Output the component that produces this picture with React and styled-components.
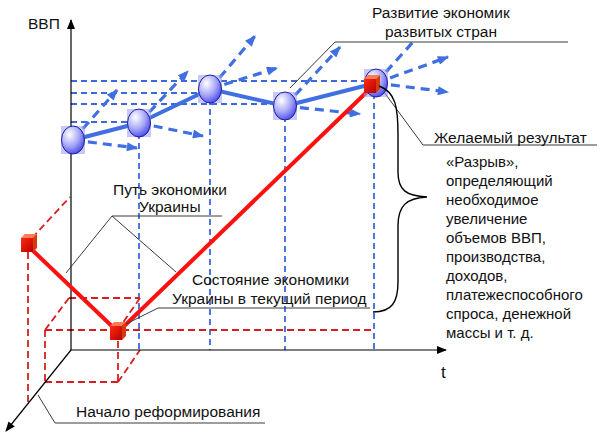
import React from 'react';
import styled, { createGlobalStyle } from 'styled-components';

const balls = [
  { x: 73, y: 140 },
  { x: 139, y: 123 },
  { x: 210, y: 89 },
  { x: 285, y: 106 },
  { x: 376, y: 83 },
];

const guidesH = [
  { y: 81, to: 372 },
  { y: 93, to: 200 },
  { y: 104, to: 282 },
  { y: 122, to: 135 },
];

const guidesV = [
  { x: 139, from: 123 },
  { x: 210, from: 89 },
  { x: 285, from: 106 },
  { x: 374, from: 83 },
];

const arrows = [
  [73, 140, 137, 148],
  [73, 140, 117, 90],
  [139, 123, 203, 136],
  [139, 123, 188, 71],
  [210, 89, 255, 36],
  [210, 89, 277, 68],
  [285, 106, 340, 47],
  [285, 106, 360, 114],
  [376, 83, 448, 57],
  [376, 83, 448, 92],
];

const boxEdges = [
  [32, 238, 70, 197],
  [28, 252, 28, 402],
  [45, 330, 374, 330],
  [45, 330, 45, 382],
  [45, 382, 118, 382],
  [118, 330, 118, 382],
  [45, 330, 69, 298],
  [69, 298, 140, 298],
  [140, 298, 120, 327],
  [118, 382, 140, 350],
];

const pointers = [
  [112, 216, 222, 216],
  [112, 216, 66, 273],
  [112, 216, 176, 272],
  [158, 308, 370, 308],
  [158, 308, 122, 326],
  [335, 42, 568, 42],
  [335, 42, 290, 88],
  [423, 145, 597, 145],
  [423, 145, 381, 88],
  [55, 423, 265, 423],
  [55, 423, 38, 395],
];

const gapLines = [
  '«Разрыв»,',
  'определяющий',
  'необходимое',
  'увеличение',
  'объемов ВВП,',
  'производства,',
  'доходов,',
  'платежеспособного',
  'спроса, денежной',
  'массы и т. д.',
];

const cubes = [
  { x: 21, y: 238 },
  { x: 110, y: 326 },
  { x: 364, y: 79 },
];

function Ball({ x, y }) {
  return (
    <g>
      <Halo x={x - 12} y={y - 14} width={24} height={28} />
      <Sphere cx={x} cy={y} rx={11.5} ry={14} />
    </g>
  );
}

function Cube({ x, y }) {
  return (
    <g>
      <CubeTop points={`${x},${y} ${x + 4},${y - 4} ${x + 16},${y - 4} ${x + 12},${y}`} />
      <CubeSide points={`${x + 12},${y} ${x + 16},${y - 4} ${x + 16},${y + 10} ${x + 12},${y + 14}`} />
      <CubeFront x={x} y={y} width={12} height={14} />
    </g>
  );
}

export default function App() {
  return (
    <Page>
      <GlobalStyle />
      <Chart viewBox="0 0 600 436" width="600" height="436">
        <defs>
          <radialGradient id="sphere" cx="35%" cy="30%" r="75%">
            <stop offset="0%" stopColor="#ffffff" />
            <stop offset="55%" stopColor="#a9a9f7" />
            <stop offset="100%" stopColor="#4a4ae8" />
          </radialGradient>
          <linearGradient id="cube" x1="0" y1="0" x2="1" y2="1">
            <stop offset="0%" stopColor="#ff2a10" />
            <stop offset="100%" stopColor="#b80000" />
          </linearGradient>
          <marker id="blueHead" viewBox="0 0 10 8" refX="9" refY="4" markerWidth="12" markerHeight="9" markerUnits="userSpaceOnUse" orient="auto">
            <path d="M0 0 L10 4 L0 8 Z" fill="#3f6fe0" />
          </marker>
          <marker id="blackHead" viewBox="0 0 10 8" refX="9" refY="4" markerWidth="12" markerHeight="8" markerUnits="userSpaceOnUse" orient="auto">
            <path d="M0 0 L10 4 L0 8 Z" fill="#000" />
          </marker>
        </defs>

        {guidesH.map((g) => (
          <Guide key={`h${g.y}`} x1={71} y1={g.y} x2={g.to} y2={g.y} />
        ))}
        {guidesV.map((g) => (
          <Guide key={`v${g.x}`} x1={g.x} y1={g.from} x2={g.x} y2={350} />
        ))}

        {boxEdges.map(([x1, y1, x2, y2], i) => (
          <RedGuide key={`r${i}`} x1={x1} y1={y1} x2={x2} y2={y2} />
        ))}

        <Axis x1={71} y1={350} x2={71} y2={20} markerEnd="url(#blackHead)" />
        <Axis x1={71} y1={350} x2={446} y2={350} markerEnd="url(#blackHead)" />
        <Axis x1={71} y1={350} x2={6} y2={431} markerEnd="url(#blackHead)" />

        {arrows.map(([x1, y1, x2, y2], i) => (
          <Forecast key={`a${i}`} x1={x1} y1={y1} x2={x2} y2={y2} markerEnd="url(#blueHead)" />
        ))}
        <Forecast x1={376} y1={83} x2={413} y2={42} />

        <Trend points={balls.map((b) => `${b.x},${b.y}`).join(' ')} />
        <Path points="27,245 118,332 372,87" />

        {pointers.map(([x1, y1, x2, y2], i) => (
          <Pointer key={`p${i}`} x1={x1} y1={y1} x2={x2} y2={y2} />
        ))}

        {balls.map((b) => (
          <Ball key={b.x} {...b} />
        ))}
        {cubes.map((c) => (
          <Cube key={c.x} {...c} />
        ))}

        <Brace d="M379 86 C 396 92, 398 108, 398 135 L 398 172 C 398 190, 406 196, 427 197 C 406 198, 398 206, 398 226 L 398 282 C 398 302, 392 312, 373 312" />

        <Label x={28} y={29} $size={15.5}>ВВП</Label>
        <Label x={441} y={378} $size={17}>t</Label>
        <Label x={372} y={18}>Развитие экономик</Label>
        <Label x={385} y={37}>развитых стран</Label>
        <Label x={434} y={143}>Желаемый результат</Label>
        <Label x={113} y={195}>Путь экономики</Label>
        <Label x={139} y={212}>Украины</Label>
        <Label x={192} y={285}>Состояние экономики</Label>
        <Label x={172} y={304}>Украины в текущий период</Label>
        <Label x={76} y={417}>Начало реформирования</Label>
        <Label x={446} y={167} $size={15}>
          {gapLines.map((line, i) => (
            <tspan key={line} x={446} dy={i === 0 ? 0 : 19}>
              {line}
            </tspan>
          ))}
        </Label>
      </Chart>
    </Page>
  );
}

//Styled Components
const GlobalStyle = createGlobalStyle`
    html, body {
        margin: 0;
        padding: 0;
        background: #ffffff;
    }
`

const Page = styled.div`
    width: 600px;
    height: 436px;
    background: #ffffff;
    overflow: hidden;
`

const Chart = styled.svg`
    display: block;
`

const Guide = styled.line`
    stroke: #3d68dc;
    stroke-width: 1.8;
    stroke-dasharray: 6 4;
`

const RedGuide = styled.line`
    stroke: #d42020;
    stroke-width: 1.8;
    stroke-dasharray: 7 4;
`

const Forecast = styled.line`
    stroke: #3f6fe0;
    stroke-width: 3.2;
    stroke-dasharray: 9 6;
`

const Trend = styled.polyline`
    fill: none;
    stroke: #3f6fe0;
    stroke-width: 4;
    stroke-linejoin: round;
`

const Path = styled.polyline`
    fill: none;
    stroke: #ff1010;
    stroke-width: 4;
    stroke-linejoin: round;
`

const Axis = styled.line`
    stroke: #000000;
    stroke-width: 1.2;
`

const Pointer = styled.line`
    stroke: #3a3a3a;
    stroke-width: 1;
`

const Brace = styled.path`
    fill: none;
    stroke: #000000;
    stroke-width: 1.4;
`

const Halo = styled.rect`
    fill: #9a9af2;
    opacity: 0.55;
`

const Sphere = styled.ellipse`
    fill: url(#sphere);
    stroke: #1c1ca8;
    stroke-width: 1;
`

const CubeFront = styled.rect`
    fill: url(#cube);
`

const CubeTop = styled.polygon`
    fill: #ff7a55;
`

const CubeSide = styled.polygon`
    fill: #d83a10;
`

const Label = styled.text`
    font-family: "Liberation Sans", Arial, sans-serif;
    font-size: ${(p) => p.$size || 15.5}px;
    fill: #111111;
`
